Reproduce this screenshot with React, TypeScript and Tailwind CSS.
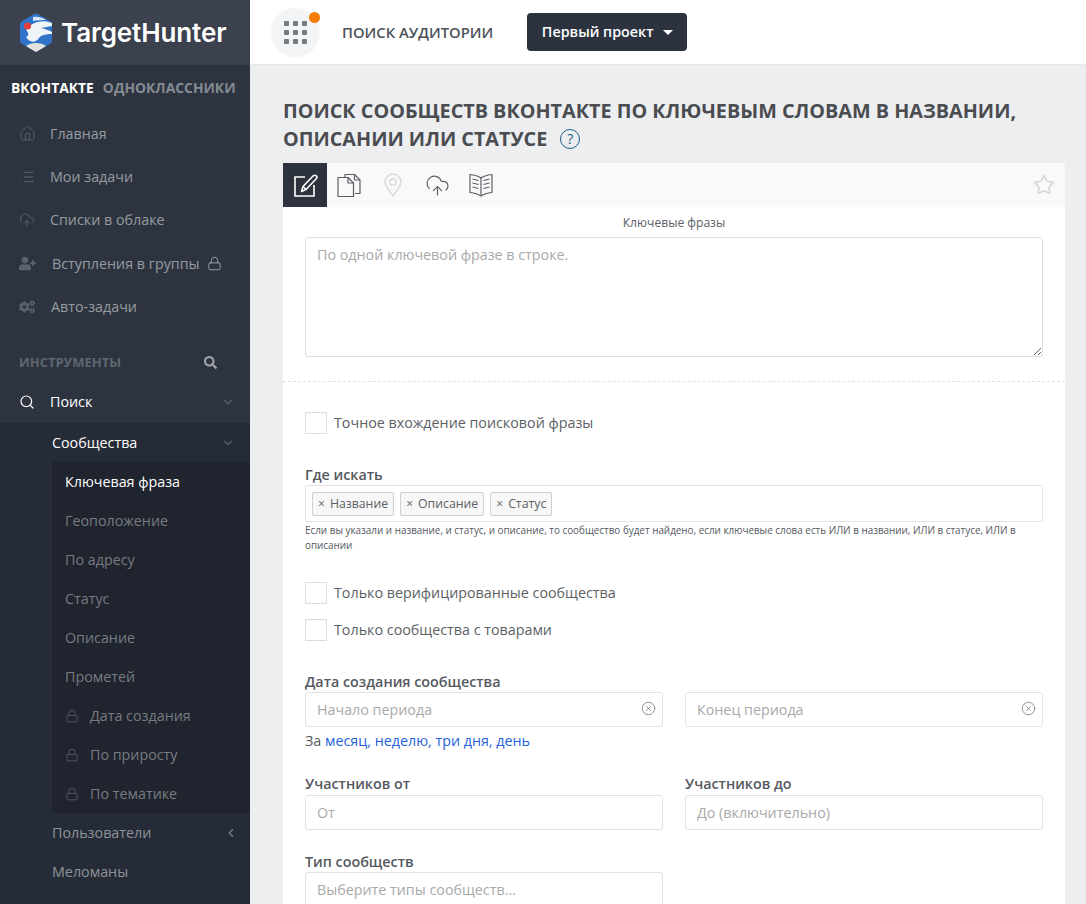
import { ChevronDown, ChevronLeft, CircleX, CloudUpload, House, List, Lock, Search, Star } from "lucide-react";
import { FaCogs, FaSearch, FaUserPlus } from "react-icons/fa";

const font = { fontFamily: '"Open Sans", sans-serif' };

const Logo = () => (
  <svg width="34" height="39" viewBox="0 0 34 39" className="shrink-0">
    <path d="M15 1 a4 4 0 0 1 4 0 L31.5 8.5 a3 3 0 0 1 1.5 2.6 V27.9 a3 3 0 0 1-1.5 2.6 L19 38 a4 4 0 0 1-4 0 L2.500 30.500 a3 3 0 0 1-1.500-2.600 V11.100 a3 3 0 0 1 1.500-2.600 Z" fill="#2f74c8" />
    <path d="M7 17 C13 9 23 6 33 10 V13 C29 14 26 14 22 15 C26 16 30 17 33 19 V21 C27 21 22 22 20 25 C16 31 10 29 7 24 C10 23 10 20 7 17 Z" fill="#eef3f8" />
    <path d="M14 4 C19 3 24 5 27 7 C22 7 18 7 14 8 Z" fill="#dce8f5" />
    <path d="M7 33 C12 29 22 29 27 33 L18 38.500 a3 3 0 0 1-2 0 Z" fill="#e6e3dc" />
    <circle cx="8.500" cy="13" r="3.600" fill="#e5403a" />
  </svg>
);

const EditIcon = () => (
  <svg width="26" height="26" viewBox="0 0 26 26" fill="none" stroke="currentColor" strokeWidth="1.600">
    <path d="M13 5 H3 V24 H22 V13" />
    <path d="M9.500 19.500 L11 14.500 L21 4 Q23 2.500 24.500 4 Q25.500 5.500 24 7 L14 17.500 Z" strokeLinejoin="round" />
    <path d="M11 14.500 L14 17.500" />
  </svg>
);

const FilesIcon = () => (
  <svg width="25" height="25" viewBox="0 0 25 25" fill="none" stroke="currentColor" strokeWidth="1.200" strokeLinejoin="round">
    <path d="M8 4 V1.500 H17.500 L23 7 V20.500 H18" />
    <path d="M17.500 1.500 V7 H23" />
    <path d="M1 4.500 H11 L16.500 10 V23.500 H1 Z" />
    <path d="M11 4.500 V10 H16.500" />
  </svg>
);

const PinIcon = () => (
  <svg width="18" height="24" viewBox="0 0 18 24" fill="none" stroke="currentColor" strokeWidth="1.300">
    <path d="M9 23 C5 17 1 13 1 9 A8 8 0 0 1 17 9 C17 13 13 17 9 23 Z" />
    <circle cx="9" cy="9" r="3.200" />
  </svg>
);

const BookIcon = () => (
  <svg width="24" height="24" viewBox="0 0 24 24" fill="none" stroke="currentColor" strokeWidth="1.200" strokeLinejoin="round">
    <path d="M12 5 C9 3 5 2 1 1.500 V19.500 C5 20 9 21 12 23 C15 21 19 20 23 19.500 V1.500 C19 2 15 3 12 5 Z" />
    <path d="M12 5 V23" />
    <path d="M3.500 6 L9.500 7.500 M3.500 10 L9.500 11.500 M3.500 14 L9.500 15.500 M20.500 6 L14.500 7.500 M20.500 10 L14.500 11.500 M20.500 14 L14.500 15.500" />
  </svg>
);

const MainItem = ({ icon, label, gap = "w-[31px]", lock }: { icon: React.ReactNode; label: string; gap?: string; lock?: boolean }) => (
  <div className="h-[43.25px] flex items-center pl-[19px] text-[14.3px] text-[#979ba0]">
    <span className={`${gap} shrink-0 text-[#5b626c]`}>{icon}</span>
    <span>{label}</span>
    {lock && <Lock size={15} strokeWidth={1.5} className="ml-[7px] text-[#a0a4aa]" />}
  </div>
);

const SubItem = ({ label, active }: { label: string; active?: boolean }) => (
  <div className={`h-[39px] flex items-center pl-[13px] text-[14.3px] ${active ? "text-white" : "text-[#777b82]"}`}>{label}</div>
);

const LockedItem = ({ label }: { label: string }) => (
  <div className="h-[39px] flex items-center pl-[13px] text-[14.3px] text-[#777b82]">
    <Lock size={14} strokeWidth={1.3} className="text-[#5b626c] mr-[11px] shrink-0" />
    {label}
  </div>
);

const Sidebar = () => (
  <aside className="w-[250px] shrink-0 h-full overflow-hidden bg-[#2d343f]">
    <div className="h-[65px] bg-[#3b424d] flex items-center pl-[19px] gap-[8px]">
      <Logo />
      <span className="text-white text-[26px] font-semibold leading-none tracking-[-0.1px]" style={{ fontFamily: "Inter, sans-serif" }}>TargetHunter</span>
    </div>
    <div className="h-[47px] flex items-center pl-[11px] gap-[9px] text-[13.85px] font-bold pb-[0px]">
      <span className="text-white">ВКОНТАКТЕ</span>
      <span className="text-[#858b92]">ОДНОКЛАССНИКИ</span>
    </div>
    <MainItem icon={<House size={17} strokeWidth={1.3} />} label="Главная" />
    <MainItem icon={<List size={16} strokeWidth={1.5} />} label="Мои задачи" />
    <MainItem icon={<CloudUpload size={16} strokeWidth={1.4} />} label="Списки в облаке" />
    <MainItem icon={<FaUserPlus size={17} />} label="Вступления в группы" gap="w-[33px]" lock />
    <MainItem icon={<FaCogs size={16} />} label="Авто-задачи" gap="w-[32px]" />
    <div className="h-[52.500px] flex items-center justify-between pl-[19px] pr-[33px] pt-[16px] text-[13px] font-bold text-[#5f6670]">
      <span>ИНСТРУМЕНТЫ</span>
      <FaSearch size={13} className="text-[#a0a4aa]" />
    </div>
    <div className="h-[42.250px] flex items-center pl-[19px] pr-[15px] text-[14.3px] text-white">
      <Search size={16} strokeWidth={1.8} className="mr-[15px]" />
      <span className="flex-1">Поиск</span>
      <ChevronDown size={14} className="text-[#5b626c]" />
    </div>
    <div className="bg-[#262c37] h-[500px]">
      <div className="h-[39px] flex items-center pl-[52px] pr-[15px] text-[14.3px] text-white">
        <span className="flex-1">Сообщества</span>
        <ChevronDown size={14} className="text-[#5b626c]" />
      </div>
      <div className="ml-[52px] bg-[#1f242e]">
        <SubItem label="Ключевая фраза" active />
        <SubItem label="Геоположение" />
        <SubItem label="По адресу" />
        <SubItem label="Статус" />
        <SubItem label="Описание" />
        <SubItem label="Прометей" />
        <LockedItem label="Дата создания" />
        <LockedItem label="По приросту" />
        <LockedItem label="По тематике" />
      </div>
      <div className="h-[39px] flex items-center pl-[52px] pr-[12px] text-[14.3px] text-[#8f9399]">
        <span className="flex-1">Пользователи</span>
        <ChevronLeft size={14} className="text-[#7a7f87]" />
      </div>
      <div className="h-[39px] flex items-center pl-[52px] text-[14.3px] text-[#8f9399]">Меломаны</div>
    </div>
  </aside>
);

const Header = () => (
  <header className="h-[65px] shrink-0 bg-white flex items-center pl-[21px] border-b border-[#e6e7e9]">
    <div className="relative w-[49px] h-[49px] rounded-full bg-[#f3f4f5] grid grid-cols-3 gap-[4px] p-[13px] content-center justify-items-center">
      {Array.from({ length: 9 }).map((_, i) => (
        <span key={i} className="w-[5px] h-[5px] rounded-[1px] bg-[#757b84]" />
      ))}
      <span className="absolute top-[4px] right-[0px] w-[11px] h-[11px] rounded-full bg-[#f57c00]" />
    </div>
    <span className="ml-[22px] text-[14.800px] font-semibold text-[#4c525b]">ПОИСК АУДИТОРИИ</span>
    <button className="ml-[34px] w-[160px] h-[38px] rounded-[4px] bg-[#2c333f] text-white text-[14.300px] font-semibold flex items-center justify-center">
      Первый проект
      <span className="ml-[9px] w-0 h-0 border-x-[5px] border-x-transparent border-t-[5px] border-t-white" />
    </button>
  </header>
);

const Check = ({ label }: { label: string }) => (
  <div className="flex items-center gap-[7px] text-[14.3px] text-[#5b5f66]">
    <span className="w-[22px] h-[22px] border border-[#dcdcdc] bg-white" />
    {label}
  </div>
);

const Tag = ({ label }: { label: string }) => (
  <span className="h-[24px] flex items-center border border-[#cfcfcf] bg-[#f7f7f7] rounded-[2px] px-[5px] text-[12.3px] text-[#5b5f66]">
    <span className="text-[12px] mr-[5px] leading-none">×</span>
    {label}
  </span>
);

const Field = ({ placeholder, clear }: { placeholder: string; clear?: boolean }) => (
  <div className="h-[35px] border border-[#e2e2e2] rounded-[3px] flex items-center pl-[11px] pr-[6px] bg-white">
    <input placeholder={placeholder} className="flex-1 min-w-0 outline-none text-[14.3px] placeholder:text-[#a9a9a9]" />
    {clear && <CircleX size={15} strokeWidth={1.3} className="text-[#7d7d7d] mb-[2px]" />}
  </div>
);

const Label = ({ children }: { children: React.ReactNode }) => (
  <div className="text-[14.3px] font-semibold text-[#55595f] leading-[19px]">{children}</div>
);

const App = () => (
  <div className="flex h-screen overflow-hidden bg-[#eceef0]" style={font}>
    <Sidebar />
    <main className="flex-1 min-w-0 flex flex-col">
      <Header />
      <div className="pl-[33px] pr-[21px] pt-[32px]">
        <h1 className="text-[19.800px] font-bold leading-[28px] text-[#4a4c50] uppercase">
          Поиск сообществ ВКонтакте по ключевым словам в названии,
          <br />
          описании или статусе
          <span className="inline-flex align-[2px] ml-[13px] w-[20px] h-[20px] rounded-full border-[1.5px] border-[#1d5f8a] items-center justify-center text-[14px] font-normal text-[#1d5f8a] normal-case">?</span>
        </h1>
        <div className="mt-[10px] bg-white">
          <div className="h-[44px] bg-[#f9f9f9] flex items-center pr-[10px]">
            <div className="w-[44px] h-[44px] bg-[#2c333f] flex items-center justify-center text-white">
              <EditIcon />
            </div>
            <div className="w-[44px] flex justify-center text-[#5a5f66]"><FilesIcon /></div>
            <div className="w-[44px] flex justify-center text-[#d6d6d6]"><PinIcon /></div>
            <div className="w-[44px] flex justify-center text-[#5a5f66]"><CloudUpload size={25} strokeWidth={1.1} /></div>
            <div className="w-[44px] flex justify-center text-[#5a5f66]"><BookIcon /></div>
            <Star size={22} strokeWidth={1.8} className="ml-auto text-[#d6d8da]" />
          </div>
          <div className="text-center text-[12.100px] text-[#5b5f66] leading-[16px] pt-[8px]">Ключевые фразы</div>
          <div className="px-[22px] pt-[6px] pb-[24px] border-b border-dashed border-[#e2e2e2]">
            <textarea
              placeholder="По одной ключевой фразе в строке."
              className="block w-full h-[120px] border border-[#dedede] rounded-[3px] px-[11px] py-[7px] outline-none text-[14.3px] leading-[20px] placeholder:text-[#a9a9a9]"
            />
          </div>
          <div className="px-[22px] pt-[30px]">
            <Check label="Точное вхождение поисковой фразы" />
            <div className="mt-[31px]"><Label>Где искать</Label></div>
            <div className="h-[37px] mt-px border border-[#e2e2e2] rounded-[2px] flex items-center gap-[6px] px-[6px] pt-[1px]">
              <Tag label="Название" />
              <Tag label="Описание" />
              <Tag label="Статус" />
            </div>
            <p className="mt-px text-[9.900px] leading-[15px] text-[#55595f]">
              Если вы указали и название, и статус, и описание, то сообщество будет найдено, если ключевые слова есть ИЛИ в названии, ИЛИ в статусе, ИЛИ в описании
            </p>
            <div className="mt-[29px] flex flex-col gap-[15px]">
              <Check label="Только верифицированные сообщества" />
              <Check label="Только сообщества с товарами" />
            </div>
            <div className="mt-[31px] grid grid-cols-2 gap-x-[22px]">
              <div>
                <div className="mb-px"><Label>Дата создания сообщества</Label></div>
                <Field placeholder="Начало периода" clear />
              </div>
              <div className="pt-[20px]">
                <Field placeholder="Конец периода" clear />
              </div>
            </div>
            <div className="mt-[4px] text-[14.3px] leading-[20px] text-[#55595f]">
              За <span className="text-[#2563d9]">месяц, неделю, три дня, день</span>
            </div>
            <div className="mt-[23px] grid grid-cols-2 gap-x-[22px]">
              <div>
                <div className="mb-[2px]"><Label>Участников от</Label></div>
                <Field placeholder="От" />
              </div>
              <div>
                <div className="mb-[2px]"><Label>Участников до</Label></div>
                <Field placeholder="До (включительно)" />
              </div>
            </div>
            <div className="mt-[22px] w-[358px]">
              <div className="mb-px"><Label>Тип сообществ</Label></div>
              <Field placeholder="Выберите типы сообществ..." />
            </div>
          </div>
        </div>
      </div>
    </main>
  </div>
);

export default App;
